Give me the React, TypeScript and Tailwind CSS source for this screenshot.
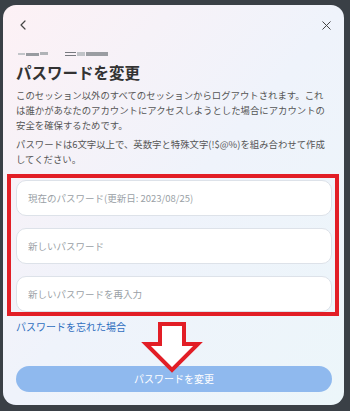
import { ChevronLeft, X } from "lucide-react";

const font = { fontFamily: '"Noto Sans CJK JP", "Noto Sans", sans-serif' };

function PwInput({ placeholder }: { placeholder: string }) {
  return (
    <input
      type="password"
      placeholder={placeholder}
      className="block w-full h-[36px] rounded-[10px] border border-[#dde2e9] bg-white pl-[11px] text-[9.5px] text-[#444] placeholder:text-[#9a9fa6] outline-none"
    />
  );
}

export default function App() {
  return (
    <div style={font} className="w-[350px] h-[411px] bg-[#3a4046] pt-[5px] pl-[3px] pr-[6px] overflow-hidden">
      <div className="relative h-[400px] rounded-[13px] bg-linear-to-br from-[#fdf1f5] via-[#eff3fb] to-[#ecf6fa] pl-[13px] pr-[12px] pt-[13px]">
        {/* header */}
        <div className="flex items-center justify-between h-[14px]">
          <ChevronLeft size={16} strokeWidth={1.8} className="text-[#444] -ml-[1px]" />
          <X size={15} strokeWidth={1.6} className="text-[#444] -mr-[2px]" />
        </div>

        {/* blurred account name */}
        <div className="mt-[19px] flex items-center h-[6px] gap-[17px] pl-[2px]">
          <div className="flex items-center gap-[1px] blur-[0.7px]">
            <div className="w-[7px] h-[2px] bg-[#c2c5c9]" />
            <div className="w-[13px] h-[3px] bg-[#989ba0]" />
            <div className="w-[8px] h-[3px] bg-[#b0b3b7] -mt-[2px]" />
          </div>
          <div className="flex items-center gap-[1px] blur-[0.7px]">
            <div className="w-[11px] h-[4px] border-y border-[#777a7f]" />
            <div className="w-[8px] h-[4px] bg-[#c0c3c7]" />
            <div className="w-[22px] h-[4px] bg-[#9a9da2]" />
          </div>
        </div>

        <h1 className="mt-[5px] text-[15.5px] leading-[20px] font-bold text-[#333]">パスワードを変更</h1>

        <div className="mt-[6px] text-[9.4px] leading-[15px] text-[#555]">
          <p>
            このセッション以外のすべてのセッションからログアウトされます。これは誰かがあなたのアカウントにアクセスしようとした場合にアカウントの安全を確保するためです。
          </p>
          <p className="mt-[3.5px]">
            パスワードは6文字以上で、英数字と特殊文字(!$@%)を組み合わせて作成してください。
          </p>
        </div>

        {/* inputs, boxed in red */}
        <div className="mt-[7px] -ml-[9px] -mr-[7px] border-4 border-[#e21e26] pl-[5px] pr-[3px] pt-[2px] flex flex-col gap-[12px]">
          <PwInput placeholder="現在のパスワード(更新日: 2023/08/25)" />
          <PwInput placeholder="新しいパスワード" />
          <PwInput placeholder="新しいパスワードを再入力" />
        </div>

        <a href="#" className="block mt-[4px] text-[10px] leading-[14px] text-[#2f6fbf]">
          パスワードを忘れた場合
        </a>

        <button className="mt-[32px] w-full h-[26px] rounded-full bg-[#8fb9ee] text-white text-[10px]">
          パスワードを変更
        </button>

        {/* red annotation arrow */}
        <svg
          className="absolute left-[137px] top-[313px]"
          width="64"
          height="60"
          viewBox="0 0 64 60"
        >
          <polygon
            points="20,6 44,6 44,26 58,26 32,52 6,26 20,26"
            fill="#ffffff"
            stroke="#e21e26"
            strokeWidth="4"
            strokeLinejoin="miter"
          />
        </svg>
      </div>
    </div>
  );
}
